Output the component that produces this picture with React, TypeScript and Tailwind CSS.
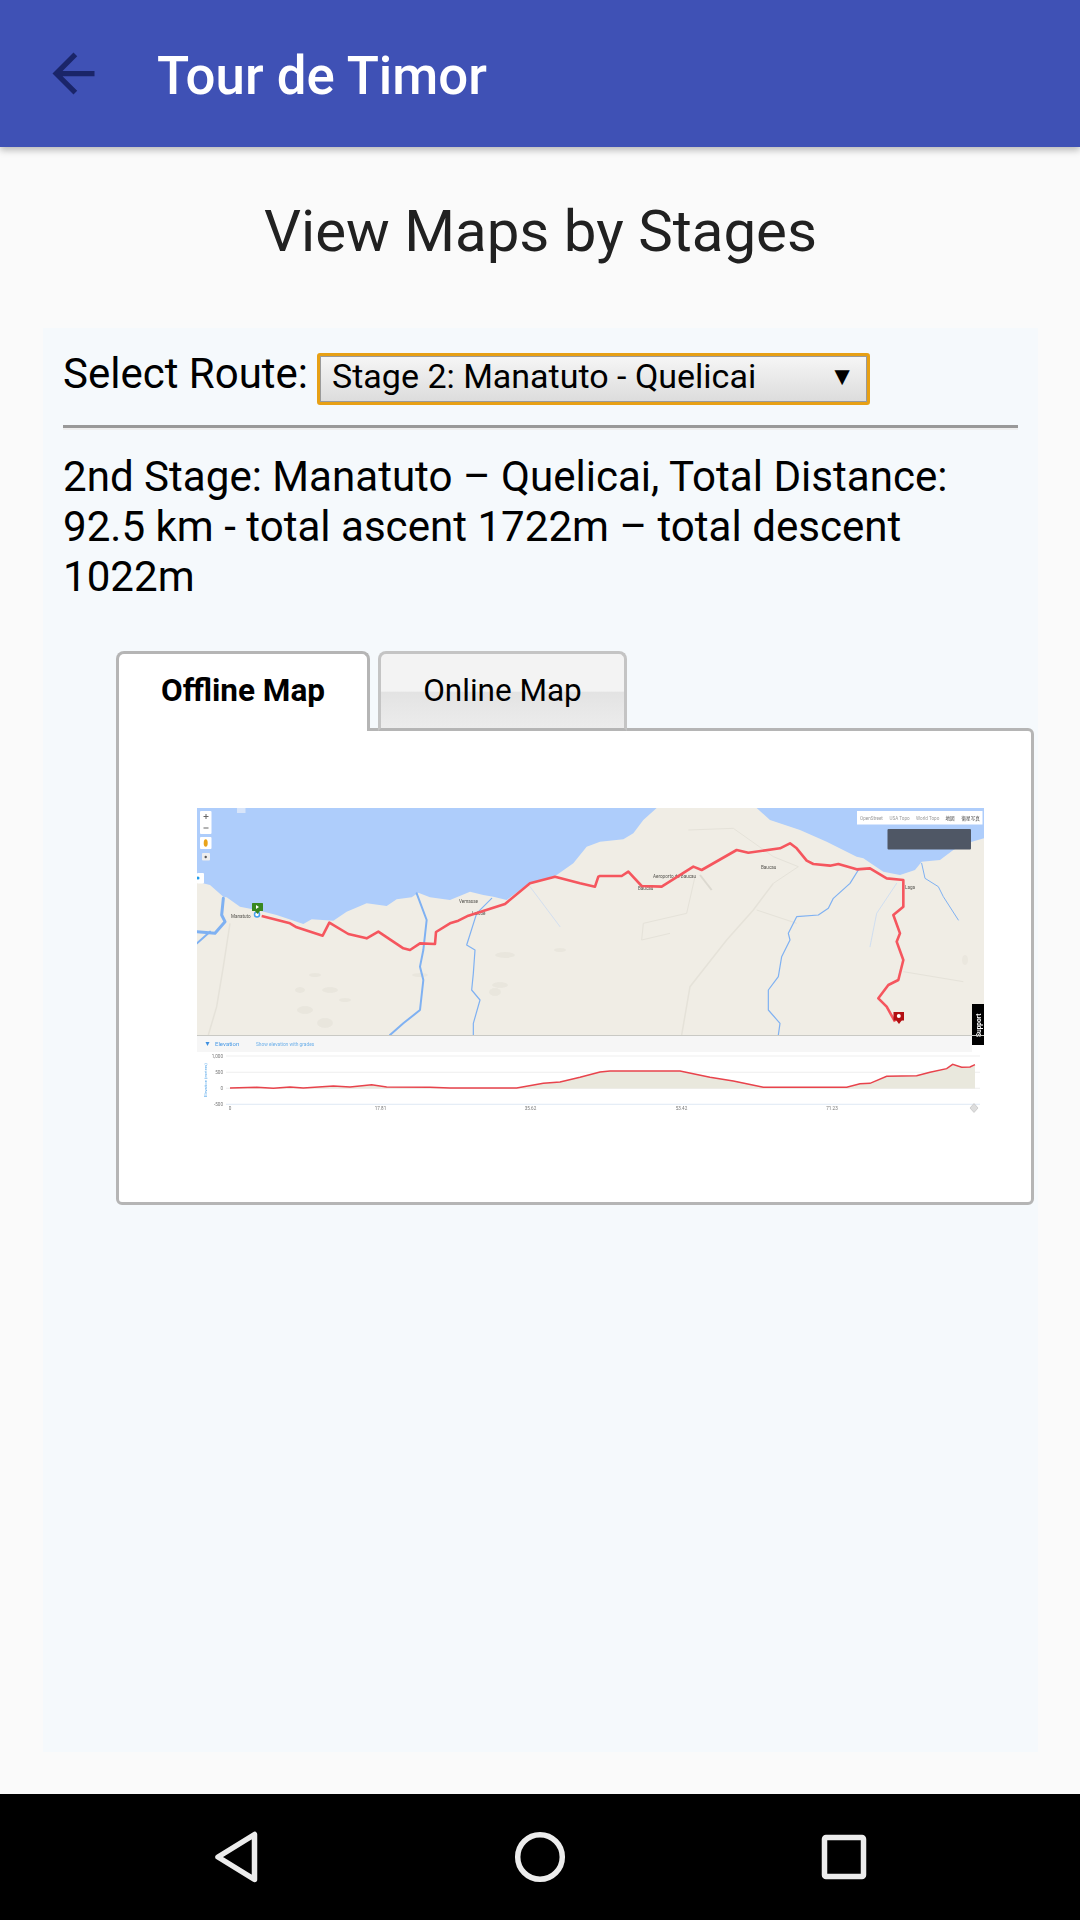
import React from "react";

type P = [number, number][];
const a = (p: P) => p.map(([x, y]) => `${190 + x / 3},${800 + y / 3}`).join(" ");
const b = (p: P) => p.map(([x, y]) => `${600 + x / 3},${800 + y / 3}`).join(" ");

const land =
  "197,882 " +
  a([[21,245],[60,255],[100,290],[110,292],[150,320],[200,330],[260,345],[340,372],[365,358],[430,362],[470,335],[530,310],[590,318],[620,298],[665,292],[685,278],[720,292],[780,300],[840,275],[880,285],[910,290],[950,300],[1010,255],[1100,225],[1150,190],[1190,140]]) +
  " " +
  b([[0,125],[70,118],[100,100],[130,60],[170,24],[470,24],[510,60],[600,90],[680,125],[770,170],[790,175],[850,215],[900,225],[945,210],[965,185],[1020,180],[1060,150],[1100,130],[1152,115],[1152,705]]) +
  " 197,1035";

const route =
  a([[215,348],[300,370],[320,382],[398,407],[418,368],[475,402],[530,415],[565,395],[640,445],[660,450],[690,430],[735,432],[738,396],[780,370],[805,362],[835,347],[945,312],[1020,250],[1095,230],[1170,250],[1215,260],[1225,230]]) +
  " " +
  b([[0,228],[65,228],[85,215],[125,258],[185,260],[280,200],[305,210],[410,150],[445,158],[540,145],[570,130],[590,145],[620,182],[640,192],[690,197],[715,192],[770,208],[810,205],[860,235],[910,240],[910,320],[880,345],[900,400],[890,425],[910,480],[895,540],[865,555],[835,595],[860,620],[885,665]]);

const elev =
  a([[120,864],[200,862],[250,865],[300,861],[340,864],[430,858],[480,861],[545,854],[590,861],[720,862],[780,864],[980,864],[1060,850],[1110,846],[1170,832],[1230,816]]) +
  " " +
  b([[0,816],[30,813],[240,813],[330,832],[400,843],[490,862],[740,862],[780,851],[810,850],[860,829],[950,827],[990,817],[1040,806],[1058,793],[1085,802],[1110,801],[1125,794]]);

const F = "Roboto, sans-serif";

function MapPicture() {
  return (
    <svg viewBox="197 808 787 312" className="block h-[312px] w-[787px] blur-[0.5px]" fontFamily={F}>
      <rect x="197" y="808" width="787" height="227" fill="#aecdfb" />
      <polygon points={land} fill="#f0ede5" />
      {/* roads */}
      <g fill="none" stroke="#e5e2d9" strokeWidth="1">
        <polyline points={a([[120,370],[100,500],[80,620],[55,705]])} strokeWidth="1.5" />
        <polyline points={b([[520,250],[460,330],[380,420],[270,560],[245,705]])} strokeWidth="1.5" />
        <polyline points={b([[265,90],[400,85],[520,170],[595,200],[520,250]])} />
        <polyline points={b([[285,230],[260,340],[130,370],[125,420],[210,400]])} />
        <polyline points={b([[470,330],[590,370]])} />
        <polyline points={b([[300,225],[335,270]])} strokeWidth="2" stroke="#dcd9d0" />
        <polyline points={b([[910,515],[1090,545]])} />
      </g>
      {/* terrain */}
      <g fill="#e8e5dc" opacity="0.8">
        <ellipse cx="300" cy="990" rx="5" ry="3" />
        <ellipse cx="315" cy="975" rx="6" ry="2" />
        <ellipse cx="330" cy="990" rx="8" ry="3" />
        <ellipse cx="305" cy="1010" rx="8" ry="4" />
        <ellipse cx="325" cy="1023" rx="8" ry="5" />
        <ellipse cx="345" cy="1000" rx="6" ry="2" />
        <ellipse cx="420" cy="975" rx="8" ry="2" />
        <ellipse cx="500" cy="985" rx="8" ry="3" />
        <ellipse cx="505" cy="955" rx="10" ry="3" />
        <ellipse cx="495" cy="992" rx="6" ry="4" />
        <ellipse cx="560" cy="950" rx="6" ry="2" />
        <ellipse cx="965" cy="960" rx="3" ry="5" />
      </g>
      {/* rivers */}
      <g fill="none" stroke="#7fb1f2" strokeLinejoin="round" strokeLinecap="round">
        <polyline points={a([[100,295],[95,345],[105,365],[75,400],[21,395]])} strokeWidth="3" />
        <polyline points={a([[60,395],[21,430]])} strokeWidth="2" />
        <polyline points={a([[680,280],[710,360],[700,450],[690,500],[700,540],[690,630],[640,670],[600,705]])} strokeWidth="2" />
        <polyline points={a([[905,295],[860,340],[830,435],[855,450],[850,520],[845,570],[870,600],[850,670],[850,705]])} strokeWidth="1.2" />
        <polyline points={b([[775,210],[750,250],[700,295],[685,325],[655,345],[590,350],[565,400],[570,420],[545,470],[535,530],[505,570],[505,630],[540,670],[535,705]])} strokeWidth="1.2" />
        <polyline points={b([[965,190],[975,235],[1015,260],[1030,290],[1075,360]])} strokeWidth="1" />
        <polyline points={a([[1020,260],[1080,340],[1110,380]])} strokeWidth="0.7" stroke="#c6d9f3" />
        <polyline points={b([[890,250],[830,340],[810,440]])} strokeWidth="0.8" stroke="#c6d9f3" />
      </g>
      {/* labels */}
      <g fontSize="4.600" fill="#55534e">
        <text x="231" y="918">Manatuto</text>
        <text x="459" y="903">Vemasse</text>
        <text x="472" y="915">Laicoe</text>
        <text x="653" y="878">Aeroporto de Baucau</text>
        <text x="638" y="889.500">Baucau</text>
        <text x="761" y="869">Baucau</text>
        <text x="905" y="889">Laga</text>
      </g>
      {/* route */}
      <polyline points={route} fill="none" stroke="#f5565e" strokeWidth="2.600" strokeLinejoin="round" />
      {/* start marker */}
      <circle cx="257" cy="914.500" r="2.500" fill="#fff" stroke="#46a0ee" strokeWidth="1.500" />
      <rect x="252" y="903" width="11" height="8" rx="0.5" fill="#38871f" />
      <polygon points="255,911 260,911 257.500,914" fill="#38871f" />
      <polygon points="256,905 256,909 259,907" fill="#fff" />
      {/* end marker */}
      <rect x="893.500" y="1012" width="10.500" height="8.500" fill="#b30f12" />
      <polygon points="896,1020 902,1020 899,1024" fill="#b30f12" />
      <circle cx="898.800" cy="1016" r="2" fill="#fff" />
      {/* zoom controls */}
      <rect x="200" y="811" width="11.500" height="23" rx="1" fill="#fff" />
      <path d="M203.500 816.500h5M206 814v5M203.500 828h5" stroke="#666" strokeWidth="1" />
      <rect x="200" y="837" width="11.500" height="12" rx="1" fill="#fff" />
      <ellipse cx="205.700" cy="843" rx="2" ry="3.800" fill="#e9a319" />
      <rect x="202" y="853" width="8" height="7.500" rx="1" fill="#eee" />
      <circle cx="205.700" cy="857" r="1.200" fill="#555" />
      <rect x="197" y="873" width="7" height="10.500" rx="1" fill="#fff" />
      <circle cx="198" cy="878" r="1.500" fill="#1e9be9" />
      <rect x="237" y="808" width="8.500" height="5" fill="#d8e5fa" />
      {/* map type bar */}
      <rect x="857" y="811" width="125.500" height="13.500" fill="#fff" />
      <g fontSize="4.600" fill="#9a9a9a">
        <text x="860" y="819.500">OpenStreet</text>
        <text x="889.500" y="819.500">USA Topo</text>
        <text x="916" y="819.500">World Topo</text>
        <text x="945.500" y="819.500" fill="#444" fontFamily="'Noto Sans CJK JP', sans-serif">地図</text>
        <text x="961.500" y="819.500" fill="#444" fontFamily="'Noto Sans CJK JP', sans-serif">衛星写真</text>
      </g>
      <rect x="887.500" y="829" width="83.500" height="20.500" rx="1" fill="#4f5765" />
      {/* support tab */}
      <rect x="972" y="1004" width="12" height="41" fill="#000" />
      <text x="0" y="0" fontSize="6.500" fontWeight="700" fill="#fff" transform="translate(980.500 1037) rotate(-90)">Support</text>
      {/* elevation */}
      <rect x="197" y="1036" width="775" height="16" fill="#f6f6f6" />
      <line x1="197" y1="1035.500" x2="984" y2="1035.500" fill="none" stroke="#c9c9c4" />
      <polygon points="205.500,1042 209.500,1042 207.500,1046" fill="#3d8fe0" />
      <text x="215" y="1046" fontSize="6" fill="#4a9be6">Elevation</text>
      <text x="256" y="1046" fontSize="4.800" fill="#6db0ea">Show elevation with grades</text>
      <g stroke="#ebebeb" strokeWidth="0.8">
        <line x1="226" y1="1056" x2="980" y2="1056" />
        <line x1="226" y1="1072.300" x2="980" y2="1072.300" />
        <line x1="226" y1="1088.300" x2="980" y2="1088.300" />
      </g>
      <line x1="226" y1="1104.300" x2="980" y2="1104.300" stroke="#d5e3f1" strokeWidth="0.8" />
      <polygon points={`${elev} 975,1088.500 230,1088.500`} fill="#e9e8dd" />
      <polyline points={elev} fill="none" stroke="#e8434c" strokeWidth="1.500" />
      <g fontSize="4.600" fill="#777" textAnchor="end">
        <text x="223" y="1057.500">1,000</text>
        <text x="223" y="1073.800">500</text>
        <text x="223" y="1090">0</text>
        <text x="223" y="1106">-500</text>
      </g>
      <text fontSize="4.200" fill="#57a7ea" textAnchor="middle" transform="translate(207 1080) rotate(-90)">Elevation (meters)</text>
      <g fontSize="4.600" fill="#777" textAnchor="middle">
        <text x="230" y="1110">0</text>
        <text x="380.500" y="1110">17.81</text>
        <text x="530.500" y="1110">35.62</text>
        <text x="681.500" y="1110">53.42</text>
        <text x="832" y="1110">71.23</text>
      </g>
      <polygon points="970,1108 974,1103.500 978,1108 974,1112.500" fill="#ddd" stroke="#bbb" strokeWidth="0.6" />
    </svg>
  );
}

export default function App() {
  return (
    <div className="flex h-[1920px] w-[1080px] flex-col overflow-hidden bg-[#fafafa] font-['Roboto',sans-serif]">
      <header className="relative z-10 flex h-[147px] shrink-0 items-center bg-[#3f51b5] pl-[42px] shadow-[0_3px_7px_rgba(0,0,0,0.28)]">
        <svg viewBox="0 0 24 24" className="h-[63px] w-[63px] shrink-0" fill="#1a2569">
          <path d="M20 11H7.830l5.590-5.590L12 4l-8 8 8 8 1.410-1.410L7.830 13H20v-2z" />
        </svg>
        <h1 className="ml-[52px] pt-[5px] text-[52.800px] font-medium leading-none text-white">Tour de Timor</h1>
      </header>

      <main className="flex min-h-0 flex-1 flex-col pl-[43px] pr-[42px] pt-[51px]">
        <h2 className="mb-[64px] text-center text-[58.200px] font-normal leading-[66px] text-[#212121]">View Maps by Stages</h2>

        <section className="mb-[42px] flex-1 bg-[#f5f9fc] px-[20px] pt-[25px] text-[42px] text-black">
          <div className="flex items-start">
            <span className="leading-[42px]">Select Route:</span>
            <div className="ml-[9px] flex h-[52px] w-[553px] items-center justify-between rounded-[3px] border-[3px] border-[#e7a015] bg-gradient-to-b from-[#f6f6f6] to-[#dcdcdc] pb-[6px] pl-[12px] pr-[12px] text-[34px] outline outline-1 -outline-offset-4 outline-[#9a9a9a]">
              <span>Stage 2: Manatuto - Quelicai</span>
              <span className="text-[26px]">▼</span>
            </div>
          </div>

          <hr className="mt-[20px] h-[5px] border-0 border-t-[3px] border-[#999999] bg-[#eeeeee]" />

          <p className="mt-[22px] text-[42.100px] leading-[50px]">
            2nd Stage: Manatuto – Quelicai, Total Distance:
            <br />
            92.5 km - total ascent 1722m – total descent
            <br />
            1022m
          </p>

          <div className="ml-[53px] mt-[49px] w-[918px]">
            <div className="relative z-10 -mb-[3px] flex gap-[8px]">
              <div className="flex h-[80px] w-[254px] items-center justify-center rounded-t-[8px] border-[3px] border-b-0 border-[#b5b5b5] bg-white pb-[3px] text-[31.500px] font-bold">
                Offline Map
              </div>
              <div className="flex h-[80px] w-[249px] items-center justify-center rounded-t-[8px] border-[3px] border-[#c4c4c4] border-b-[#b5b5b5] bg-[linear-gradient(#f3f3f3_0%,#f3f3f3_50%,#e3e3e3_52%,#ececec_100%)] text-[31.500px]">
                Online Map
              </div>
            </div>
            <div className="h-[477px] rounded-b-[6px] rounded-tr-[6px] border-[3px] border-[#b5b5b5] bg-white pl-[78px] pt-[77px]">
              <MapPicture />
            </div>
          </div>
        </section>
      </main>

      <footer className="h-[126px] shrink-0 bg-black">
        <svg viewBox="0 0 1080 126" className="block h-[126px] w-[1080px]" fill="none" stroke="#ececec" strokeWidth="5.500" strokeLinejoin="round">
          <path d="M254.500 40.500V85.500L218 63Z" />
          <circle cx="540" cy="63" r="22.300" />
          <rect x="824.500" y="43.500" width="39" height="39" rx="1.500" />
        </svg>
      </footer>
    </div>
  );
}
